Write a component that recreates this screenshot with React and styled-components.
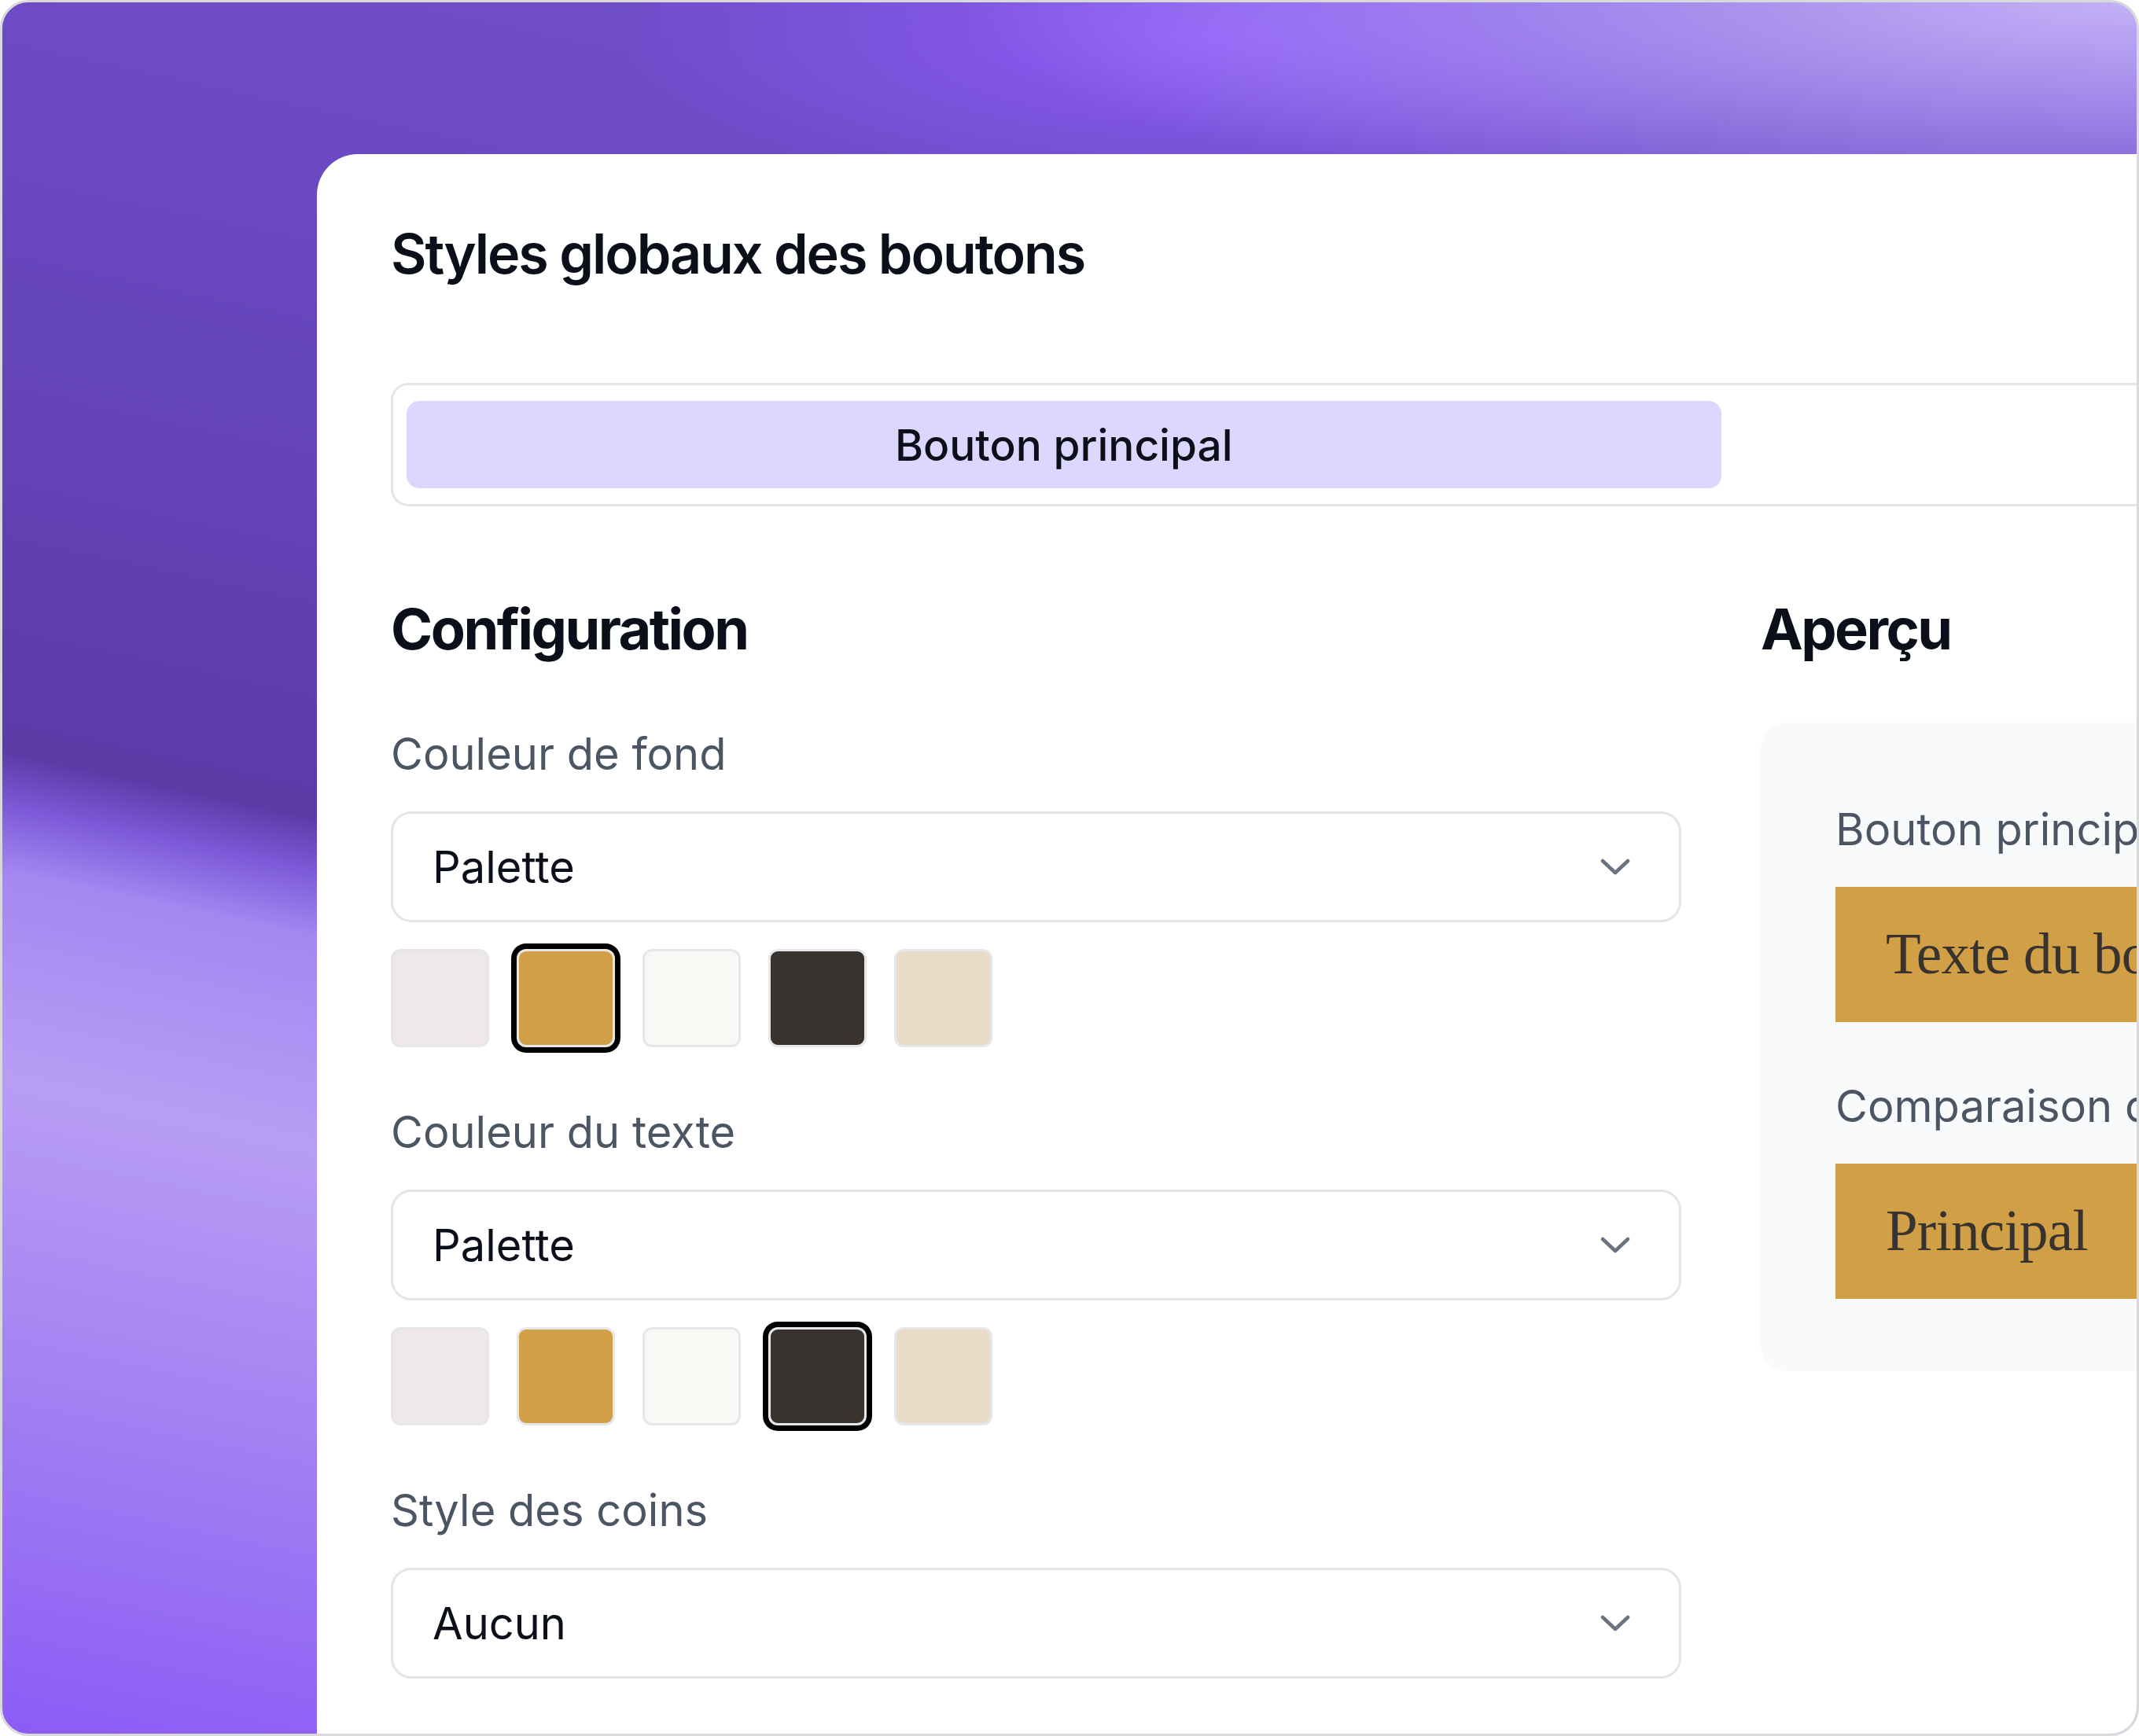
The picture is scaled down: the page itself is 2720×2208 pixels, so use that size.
import React from "react";
import styled, { createGlobalStyle } from "styled-components";

const Global = createGlobalStyle`
  html, body { margin: 0; padding: 0; background: #ffffff; }
  body { font-family: Inter, "Noto Sans", "Liberation Sans", sans-serif; }
  * { box-sizing: border-box; }
`;

const Frame = styled.div`
  width: 2720px;
  height: 2208px;
  border: 3px solid #d9d9dc;
  border-radius: 36px;
  overflow: hidden;
  background:
    radial-gradient(55% 13% at 100% 0%, rgba(200, 182, 250, 0.95) 0%, rgba(190, 170, 250, 0.55) 50%, rgba(190, 170, 250, 0) 100%),
    radial-gradient(28% 10% at 57% 2%, rgba(142, 92, 250, 0.95) 0%, rgba(142, 92, 250, 0) 100%),
    linear-gradient(192deg, #7554d0 0%, #6d4bc6 21%, #6444b8 39%, #5b3ba6 55%, #7c5ad8 57.5%, #a487f1 60.5%, #b89df5 70%, #a483f2 83%, #8b5cf6 100%);
`;

const Card = styled.div`
  margin: 193px 0 0 400px;
  width: 3571px;
  min-height: 2100px;
  background: #ffffff;
  border-top-left-radius: 52px;
  padding: 77px 94px 0;
`;

const Title = styled.h1`
  margin: 0;
  font-size: 70px;
  line-height: 100px;
  font-weight: 600;
  letter-spacing: -0.03em;
  color: #0b0f19;
`;

const TabList = styled.div`
  margin-top: 114px;
  display: grid;
  grid-template-columns: 1fr 1fr;
  border: 3px solid #e5e5e5;
  border-radius: 22px;
  padding: 20px 17px;
`;

const Tab = styled.div`
  height: 111px;
  border-radius: 16px;
  display: flex;
  align-items: center;
  justify-content: center;
  font-size: 55px;
  font-weight: 500;
  color: #0b0f19;
  background: ${(p) => (p.$active ? "#ddd6fe" : "transparent")};
`;

const Columns = styled.div`
  margin-top: 106px;
  display: grid;
  grid-template-columns: 1641px 1641px;
  column-gap: 101px;
`;

const Column = styled.div`
  display: flex;
  flex-direction: column;
`;

const Heading = styled.h2`
  margin: 0;
  font-size: 72px;
  line-height: 100px;
  font-weight: 700;
  letter-spacing: -0.035em;
  color: #0b0f19;
`;

const Field = styled.div`
  margin-top: ${(p) => (p.$first ? "69px" : "68px")};
  display: flex;
  flex-direction: column;
`;

const Label = styled.div`
  font-size: 56px;
  line-height: 80px;
  font-weight: 400;
  color: #4b5563;
`;

const Select = styled.div`
  margin-top: 33px;
  height: 141px;
  border: 3px solid #e5e5e5;
  border-radius: 26px;
  padding: 0 62px 0 50px;
  display: flex;
  align-items: center;
  justify-content: space-between;
  font-size: 56px;
  color: #0b0f19;
  background: #ffffff;
`;

const Chevron = () => (
  <svg width="38" height="22" viewBox="0 0 38 22" fill="none">
    <path d="M3 3 L19 18 L35 3" stroke="#6b7280" strokeWidth="4.5" strokeLinecap="round" strokeLinejoin="round" />
  </svg>
);

const Swatches = styled.div`
  margin-top: 34px;
  display: flex;
  gap: 35px;
`;

const Swatch = styled.div`
  width: 125px;
  height: 125px;
  border-radius: 12px;
  border: 3px solid #e5e7eb;
  background: ${(p) => p.$color};
  box-shadow: ${(p) => (p.$selected ? "0 0 0 7px #000000" : "none")};
`;

const Panel = styled.div`
  margin-top: 69px;
  background: #f9fafb;
  border-radius: 32px;
  padding: 96px 0 92px 95px;
  overflow: hidden;
`;

const PanelLabel = styled(Label)`
  white-space: nowrap;
`;

const PreviewRow = styled.div`
  margin-top: 33px;
  display: flex;
  gap: 32px;
`;

const PreviewButton = styled.div`
  height: 172px;
  padding: 0 64px;
  display: flex;
  align-items: center;
  white-space: nowrap;
  background: #d1a046;
  color: #38332f;
  font-family: "Liberation Serif", "Times New Roman", serif;
  font-size: 73px;
  letter-spacing: -0.01em;
  border-radius: 0;
`;

const PanelField = styled.div`
  margin-top: ${(p) => (p.$first ? "0" : "67px")};
`;

const palette = ["#efe8eb", "#d1a046", "#faf8f5", "#38332f", "#e8dcc9"];

function SwatchRow({ selected }) {
  return (
    <Swatches>
      {palette.map((c, i) => (
        <Swatch key={c} $color={c} $selected={i === selected} />
      ))}
    </Swatches>
  );
}

export default function App() {
  return (
    <>
      <Global />
      <Frame>
        <Card>
          <Title>Styles globaux des boutons</Title>
          <TabList>
            <Tab $active>Bouton principal</Tab>
            <Tab>Bouton secondaire</Tab>
          </TabList>
          <Columns>
            <Column>
              <Heading>Configuration</Heading>
              <Field $first>
                <Label>Couleur de fond</Label>
                <Select>
                  <span>Palette</span>
                  <Chevron />
                </Select>
                <SwatchRow selected={1} />
              </Field>
              <Field>
                <Label>Couleur du texte</Label>
                <Select>
                  <span>Palette</span>
                  <Chevron />
                </Select>
                <SwatchRow selected={3} />
              </Field>
              <Field>
                <Label>Style des coins</Label>
                <Select>
                  <span>Aucun</span>
                  <Chevron />
                </Select>
              </Field>
            </Column>
            <Column>
              <Heading>Aperçu</Heading>
              <Panel>
                <PanelField $first>
                  <PanelLabel>Bouton principal</PanelLabel>
                  <PreviewRow>
                    <PreviewButton>Texte du bouton</PreviewButton>
                  </PreviewRow>
                </PanelField>
                <PanelField>
                  <PanelLabel>Comparaison des boutons</PanelLabel>
                  <PreviewRow>
                    <PreviewButton>Principal</PreviewButton>
                    <PreviewButton>Secondaire</PreviewButton>
                  </PreviewRow>
                </PanelField>
              </Panel>
            </Column>
          </Columns>
        </Card>
      </Frame>
    </>
  );
}
